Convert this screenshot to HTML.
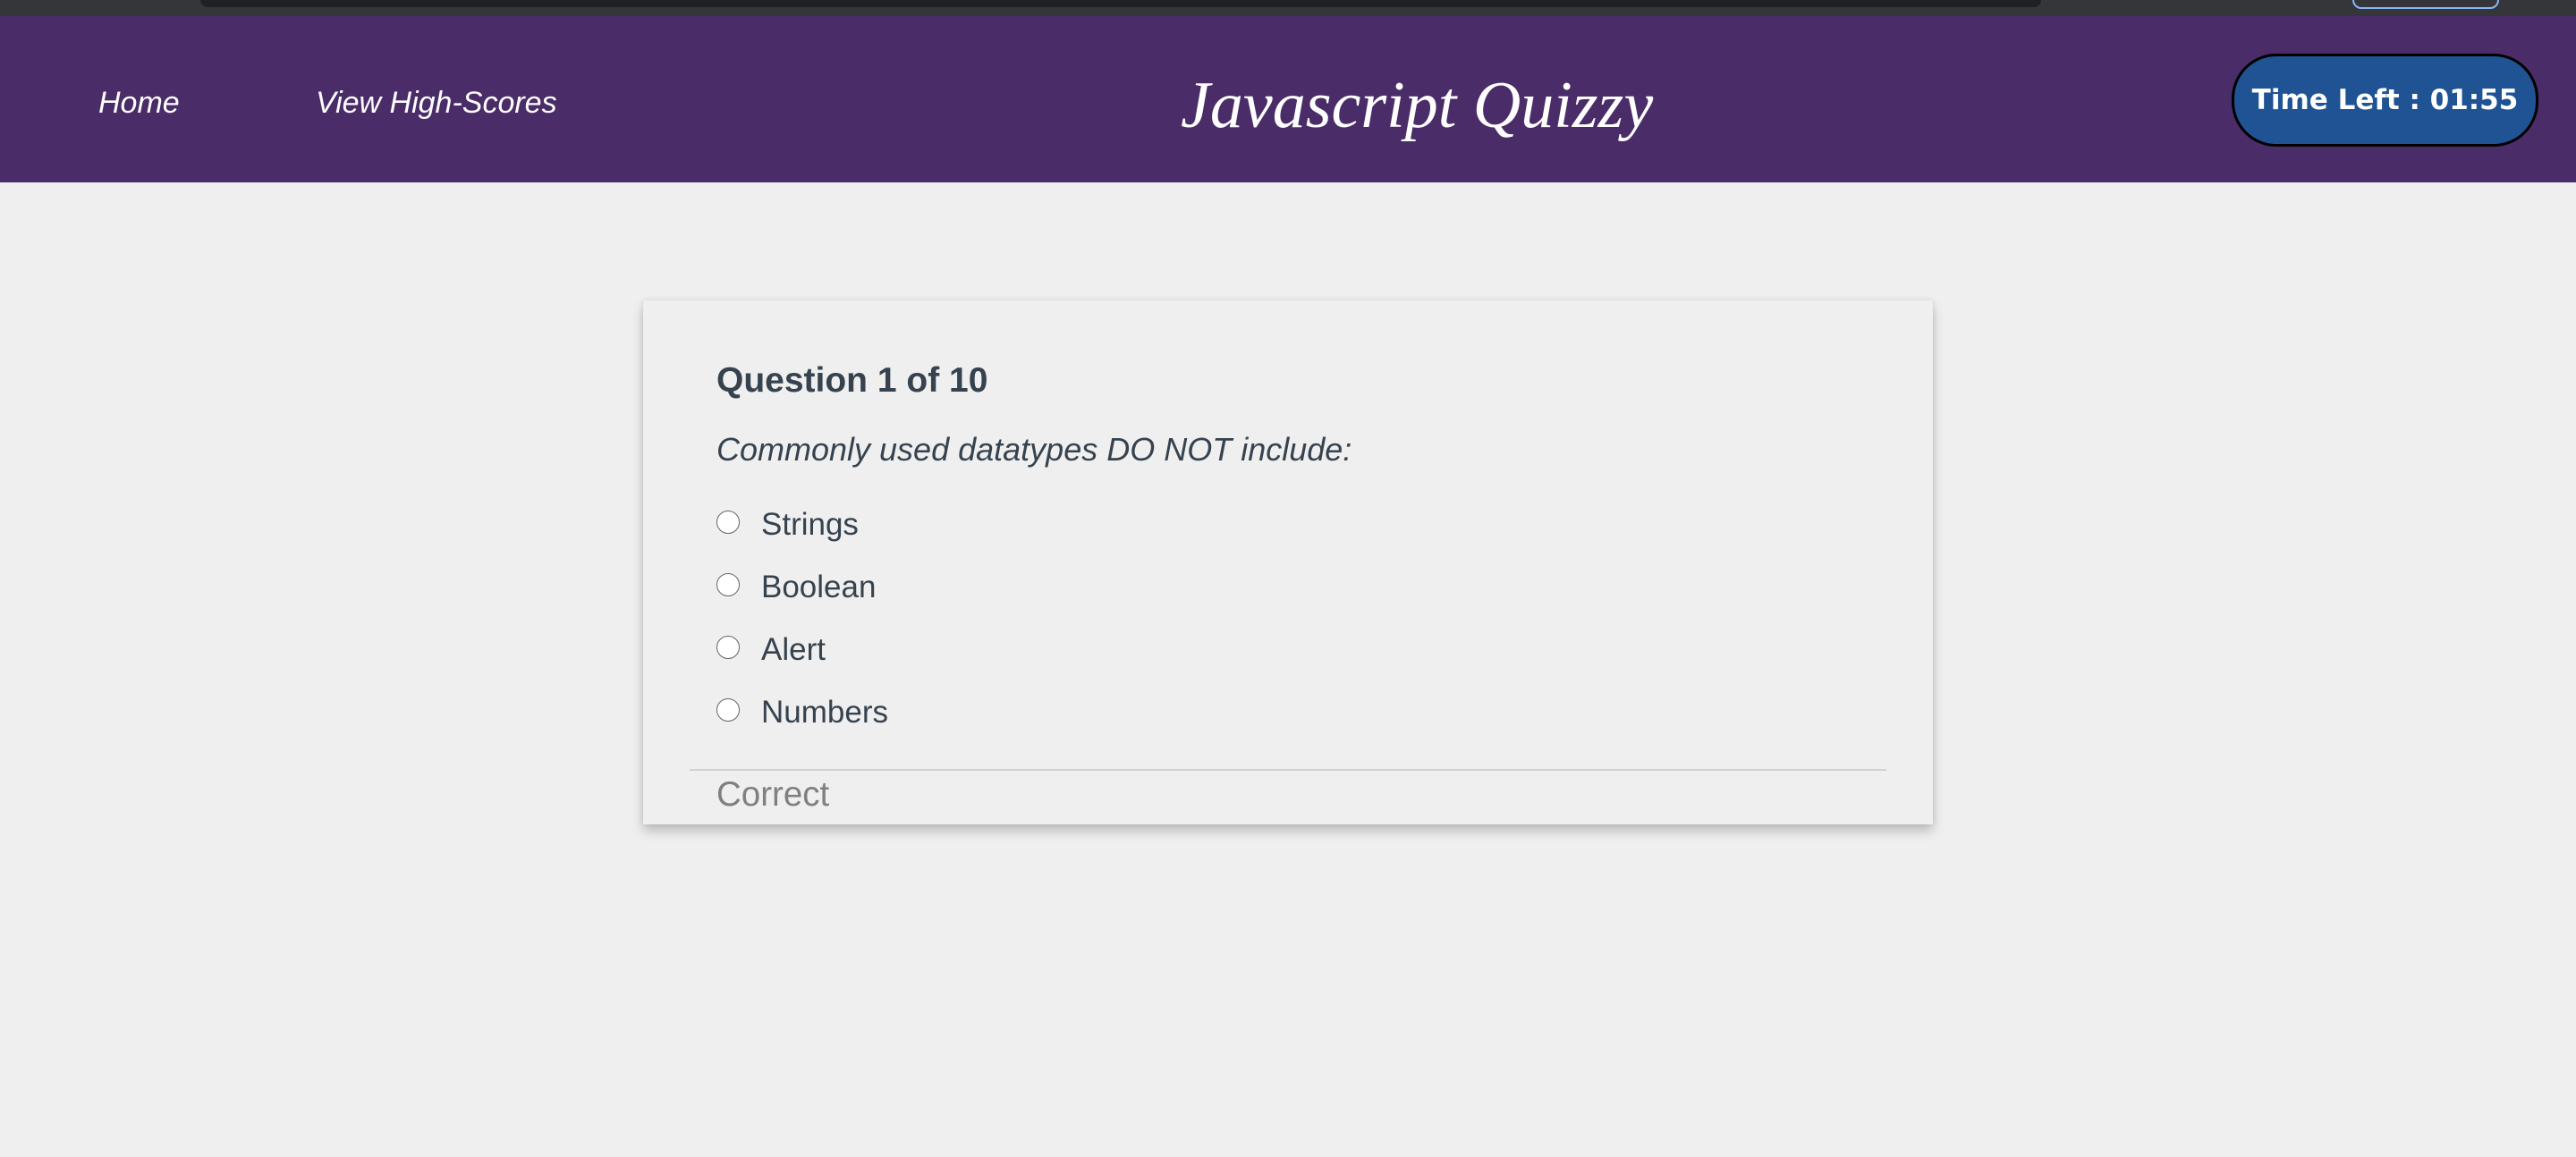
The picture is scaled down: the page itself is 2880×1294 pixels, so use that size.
<!DOCTYPE html>
<html><head><meta charset="utf-8"><style>
body{margin:0;width:2880px;height:1294px;background:#efefef;position:relative;overflow:hidden;font-family:"Liberation Sans",sans-serif}
.top{position:absolute;left:0;top:0;width:2880px;height:18px;background:#35363a}
.top .a{position:absolute;left:224px;top:0;width:2058px;height:8px;background:#202124;border-radius:0 0 14px 14px}
.top .b{position:absolute;left:2630px;top:-10px;width:160px;height:16px;border:2px solid #8ab4f8;border-radius:10px}
.nav{position:absolute;left:0;top:18px;width:2880px;height:186px;background:#4a2c68}
.nav span{position:absolute;color:#fff;font-style:italic;font-size:34px;top:78px}
.title{position:absolute;left:1320px;top:58px;color:#fff;font-family:"Liberation Serif",serif;font-style:italic;font-size:74px;white-space:nowrap}
.timer{position:absolute;left:2495px;top:42px;width:337px;height:98px;border:3px solid #000;border-radius:50px;background:#1f5393;color:#fff;font-family:"DejaVu Sans",sans-serif;font-weight:bold;font-size:31px;text-align:center;line-height:98px}
.card{position:absolute;left:719px;top:336px;width:1442px;height:586px;background:#efefef;box-shadow:0 8px 12px rgba(0,0,0,.2),0 0 6px rgba(0,0,0,.1)}
.t{position:absolute;color:#36434f;white-space:nowrap}
.r{position:absolute;left:82px;width:24px;height:24px;border:1.5px solid #666;border-radius:50%;background:#fff}
</style></head><body>
<div class="top"><div class="a"></div><div class="b"></div></div>
<div class="nav">
<span style="left:110px">Home</span>
<span style="left:353px">View High-Scores</span>
<div class="title">Javascript Quizzy</div>
<div class="timer">Time Left : 01:55</div>
</div>
<div class="card">
<div class="t" style="left:82px;top:68px;font-size:39px;font-weight:bold">Question 1 of 10</div>
<div class="t" style="left:82px;top:146px;font-size:36px;font-style:italic">Commonly used datatypes DO NOT include:</div>
<div class="r" style="top:235px"></div><div class="t" style="left:132px;top:231px;font-size:35px">Strings</div>
<div class="r" style="top:305px"></div><div class="t" style="left:132px;top:301px;font-size:35px">Boolean</div>
<div class="r" style="top:375px"></div><div class="t" style="left:132px;top:371px;font-size:35px">Alert</div>
<div class="r" style="top:445px"></div><div class="t" style="left:132px;top:441px;font-size:35px">Numbers</div>
<div style="position:absolute;left:52px;top:524px;width:1338px;height:2px;background:#d0d0d0"></div>
<div class="t" style="left:82px;top:531px;font-size:38.5px;color:#808080">Correct</div>
</div>
</body></html>
